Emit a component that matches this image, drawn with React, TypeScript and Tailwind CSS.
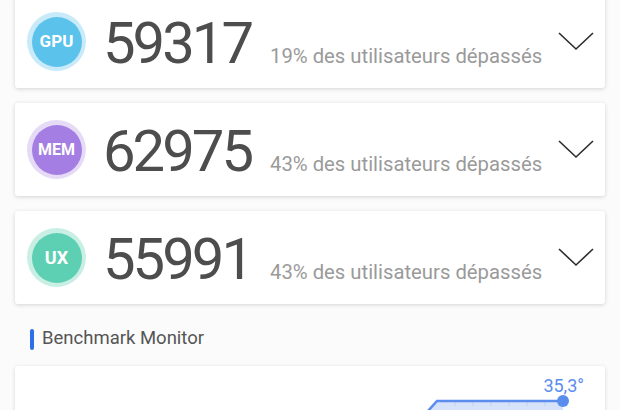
const SCORES = [
  { label: "GPU", score: "59317", pct: "19%", inner: "bg-[#5bc2ec]", outer: "bg-[#c8eaf9]", size: "text-[17px]" },
  { label: "MEM", score: "62975", pct: "43%", inner: "bg-[#a47ee2]", outer: "bg-[#e6dbf7]", size: "text-[16px]" },
  { label: "UX", score: "55991", pct: "43%", inner: "bg-[#5dcfb3]", outer: "bg-[#c9efe5]", size: "text-[18px]" },
];

function ScoreCard({ s }: { s: (typeof SCORES)[number] }) {
  return (
    <div className="h-[93px] bg-white rounded-[3px] shadow-[0_1px_4px_rgba(0,0,0,0.16)] flex items-center pl-[12px] pr-[11px]">
      {/* badge */}
      <div className={`w-[59px] h-[59px] rounded-full flex items-center justify-center shrink-0 ${s.outer}`}>
        <div className={`w-[50px] h-[50px] rounded-full flex items-center justify-center text-white font-bold ${s.inner} ${s.size}`}>
          {s.label}
        </div>
      </div>
      <div className="flex items-baseline ml-[17px] flex-1 min-w-0 pt-[2px]">
        <span className="text-[58px] leading-none text-[#4d4d4d] tracking-[-3px]">{s.score}</span>
        <span className="ml-[19px] text-[20.3px] text-[#9a9a9a] whitespace-nowrap">
          {s.pct} des utilisateurs dépassés
        </span>
      </div>
      <svg width="36" height="20" viewBox="0 0 36 20" className="shrink-0 -mt-[1px]">
        <path d="M1 2 L18 18 L35 2" fill="none" stroke="#2b2b2b" strokeWidth="1.6" />
      </svg>
    </div>
  );
}

export default function App() {
  return (
    <div className="w-[620px] h-[410px] overflow-hidden bg-[#fbfbfb] font-['Roboto',sans-serif]">
      <div className="flex flex-col gap-[15px] px-[15px] -mt-[5px]">
        {SCORES.map((s) => (
          <ScoreCard key={s.label} s={s} />
        ))}
      </div>

      <div className="flex items-center gap-[8px] pl-[30px] mt-[24px] h-[22px]">
        <div className="w-[4px] h-[21px] rounded-full bg-[#2f6ee9]" />
        <span className="text-[18.5px] text-[#555555]">Benchmark Monitor</span>
      </div>

      <div className="mx-[15px] mt-[16px] h-[80px] bg-white rounded-[3px] shadow-[0_1px_4px_rgba(0,0,0,0.14)] relative">
        <span className="absolute right-[21px] top-[6px] text-[18px] text-[#5b8def]">35,3°</span>
        <svg width="590" height="80" viewBox="0 0 590 80" className="absolute left-0 top-0">
          <path d="M413 45 L422 35 L548 35 L548 80 L405 80 Z" fill="#d5e2fa" />
          {[440, 458, 476, 494, 512, 530].map((x) => (
            <line key={x} x1={x} y1={35} x2={x} y2={40} stroke="#bcd0f6" strokeWidth="1" />
          ))}
          <path d="M413 45 L422 35 L548 35" fill="none" stroke="#5b8def" strokeWidth="2.5" />
          <circle cx="548" cy="35" r="6" fill="#5b8def" />
        </svg>
      </div>
    </div>
  );
}
